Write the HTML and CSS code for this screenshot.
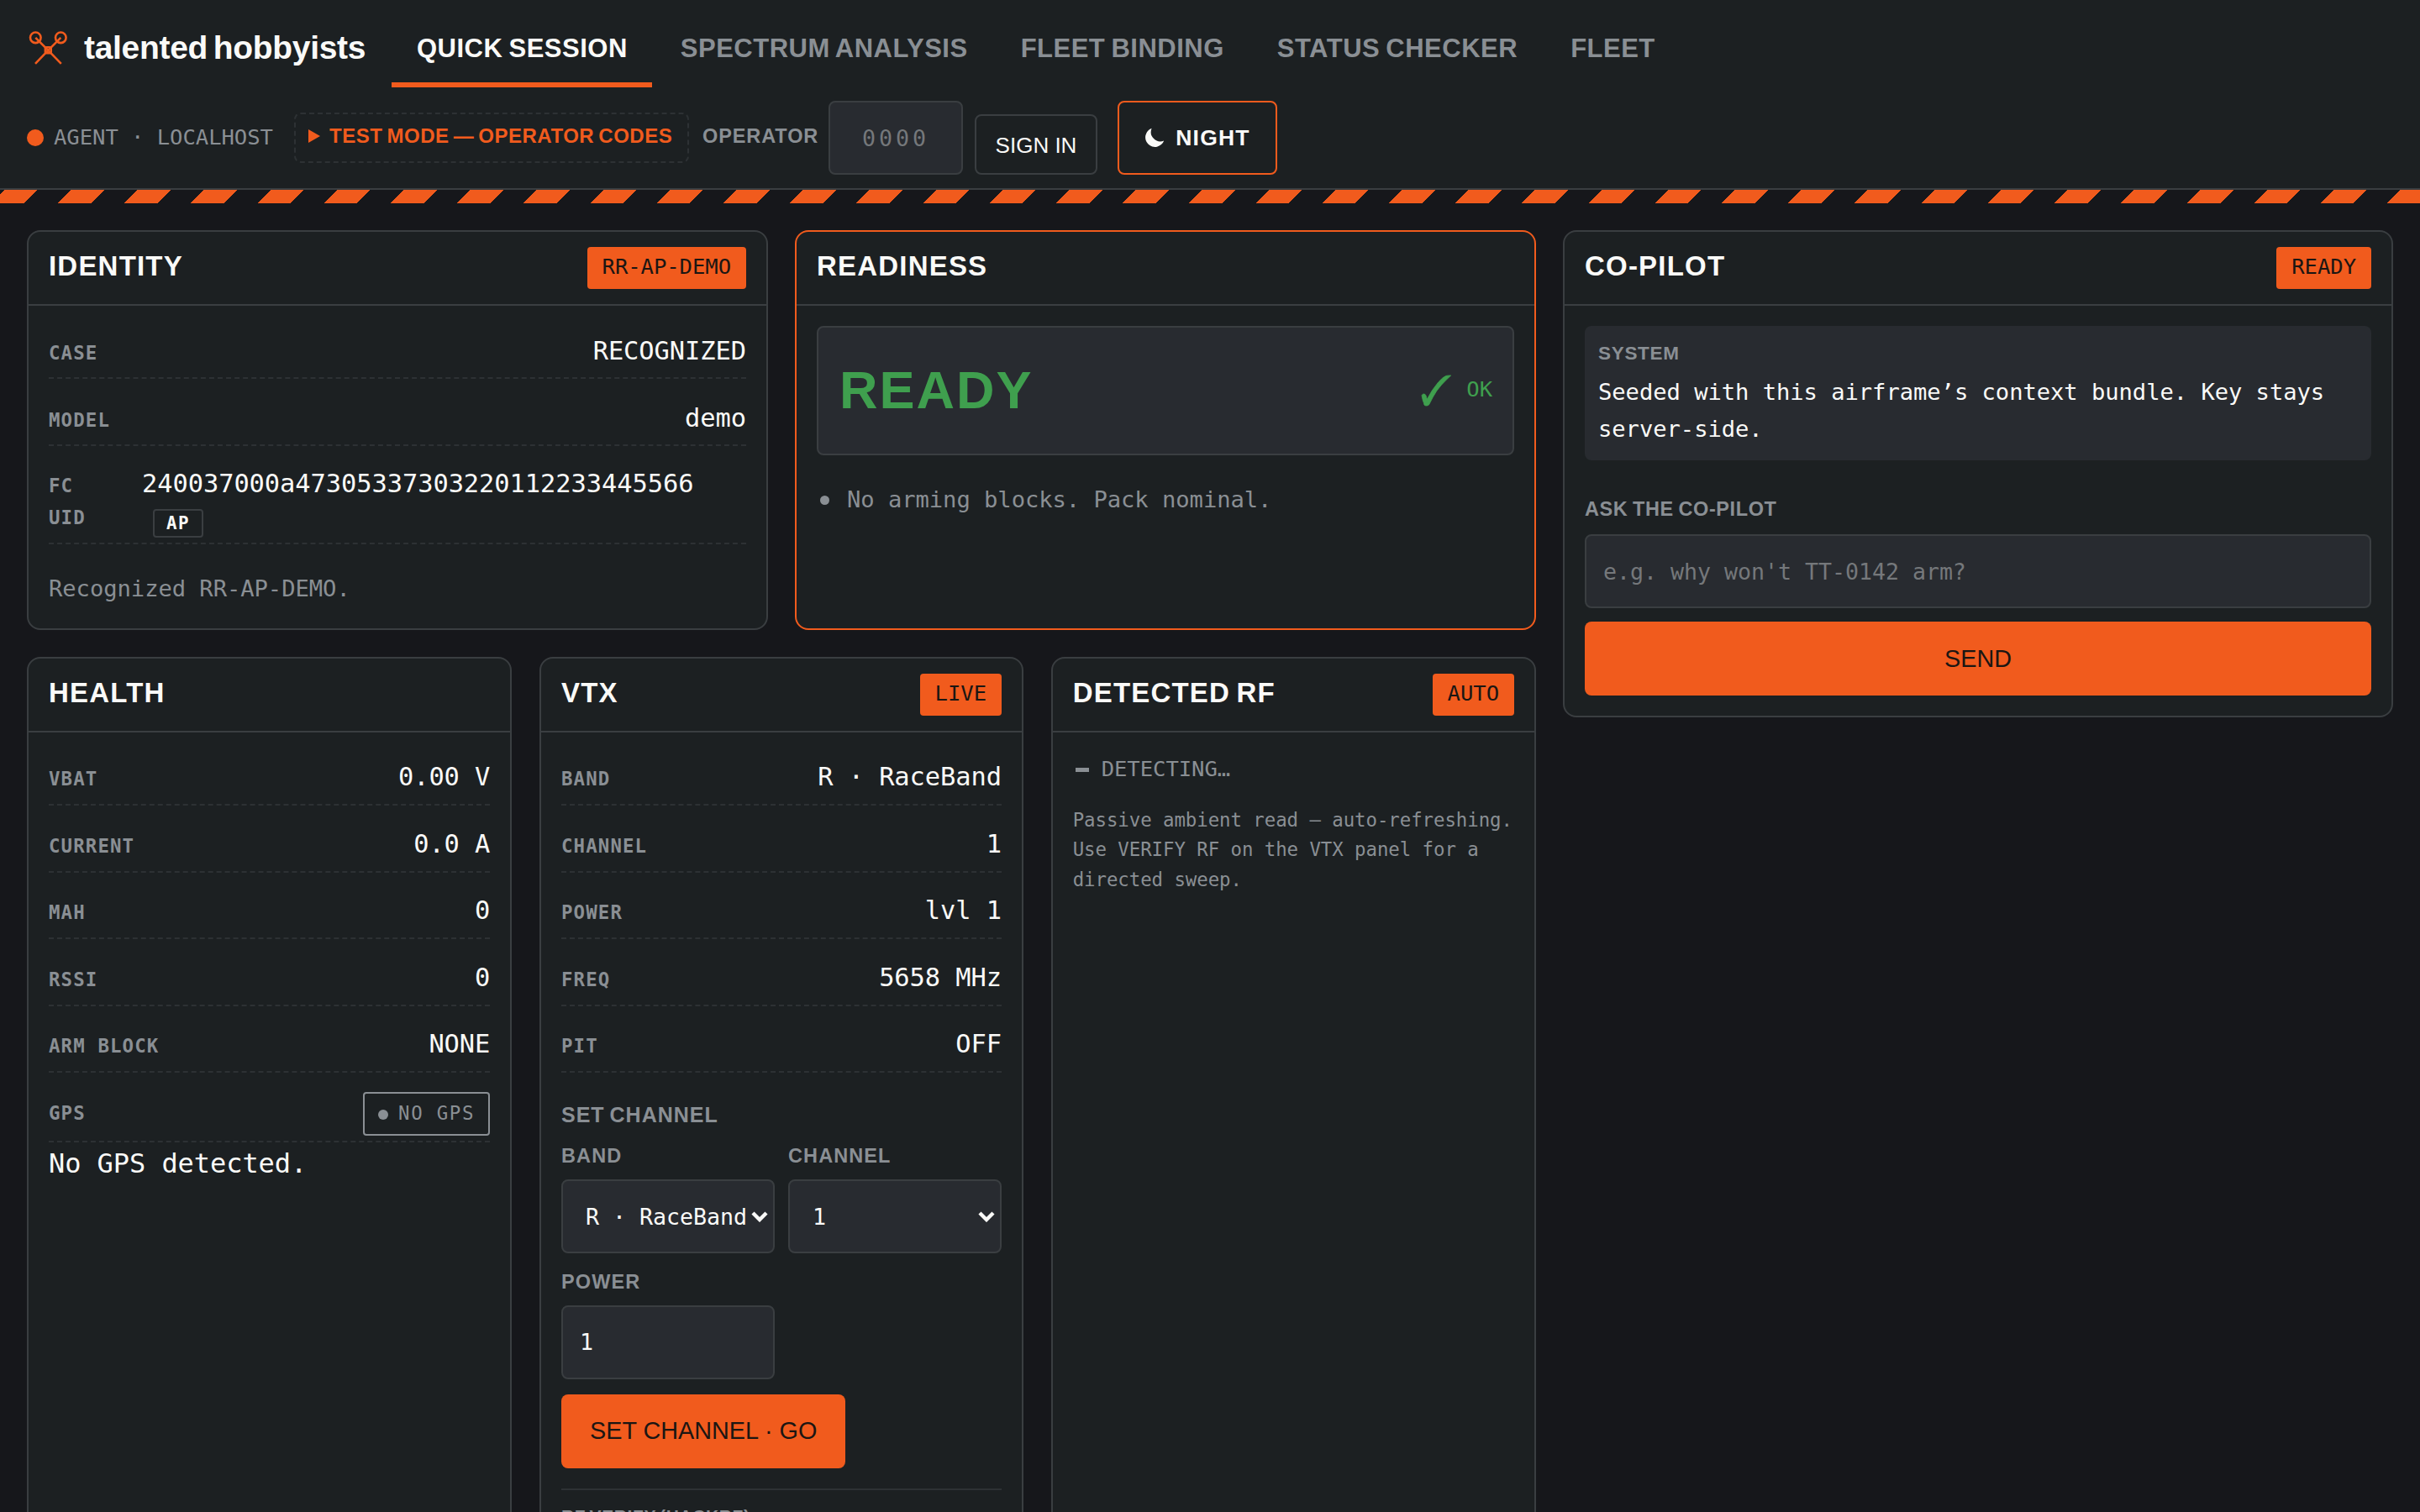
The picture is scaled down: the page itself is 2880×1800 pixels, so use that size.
FILE: index.html
```html
<!DOCTYPE html>
<html lang="en">

<head>
  <meta charset="UTF-8" />
  <meta name="viewport" content="width=device-width, initial-scale=1.0" />
  <title>talented hobbyists</title>
  <link rel="stylesheet" href="styles.css">
</head>

<body>
  <header class="topbar">
    <div class="topbar-row">
      <a class="brand">
        <svg class="brand-mark" viewBox="0 0 48 48" fill="none" stroke="currentColor" stroke-width="2.6">
          <circle cx="10.3" cy="11.8" r="6.3" />
          <circle cx="40.3" cy="11.8" r="6.3" />
          <path d="M10.3 11.8 L25.3 26.8 L40.3 11.8 M25.3 26.8 L10 42.8 M25.3 26.8 L40.8 42.8" />
          <rect x="21.8" y="23.3" width="7" height="7" rx="1.5" stroke-width="2.4" />
        </svg>
        <span>talented hobbyists</span>
      </a>
      <nav class="tabs">
        <a class="tab active">QUICK SESSION</a>
        <a class="tab">SPECTRUM ANALYSIS</a>
        <a class="tab">FLEET BINDING</a>
        <a class="tab">STATUS CHECKER</a>
        <a class="tab">FLEET</a>
      </nav>
    </div>
    <div class="topbar-row session">
      <div class="agent"><i class="dot"></i><span>AGENT · LOCALHOST</span></div>
      <div class="test-mode"><i class="caret"></i>TEST MODE — OPERATOR CODES</div>
      <label class="op-label" for="op">OPERATOR</label>
      <input class="field op-code" id="op" placeholder="0000" />
      <button class="btn-ghost">SIGN IN</button>
      <button class="btn-theme">
        <svg class="moon" viewBox="0 0 24 24" fill="currentColor">
          <path d="M8.6 0.8 A11.4 11.4 0 1 0 23.2 15.4 A11.2 11.2 0 0 1 8.6 0.8 Z" />
        </svg>
        NIGHT
      </button>
    </div>
  </header>
  <div class="hazard"></div>

  <main class="layout">
    <div class="panels">
      <section class="panel wide">
        <div class="panel-head">
          <h2>IDENTITY</h2><span class="badge">RR-AP-DEMO</span>
        </div>
        <div class="panel-body">
          <div class="row"><span class="key">CASE</span><span class="val">RECOGNIZED</span></div>
          <div class="row"><span class="key">MODEL</span><span class="val">demo</span></div>
          <div class="row row-uid">
            <span class="key">FC UID</span>
            <span class="val">240037000a47305337303220112233445566 <span class="chip">AP</span></span>
          </div>
          <p class="note">Recognized RR-AP-DEMO.</p>
        </div>
      </section>

      <section class="panel wide hot">
        <div class="panel-head">
          <h2>READINESS</h2>
        </div>
        <div class="panel-body">
          <div class="verdict">
            <strong>READY</strong>
            <span class="verdict-state">
              <svg class="check" viewBox="0 0 40 40" fill="currentColor" stroke="currentColor" stroke-width="0.8">
                <path d="M3 25.7 Q4 23.8 5.5 24 Q7.4 24.2 8 26 L9.3 30.3 Q15 19 22.7 10 Q28 4 31.7 2.5 Q34 1.8 37.7 2 L32.7 6.7 Q26.5 12.6 21 20 Q16 27.6 11.7 36.7 Q10 38.2 8.3 38 Q6.4 38 6 37 Q5.4 34 4.3 31.7 Z" />
              </svg>
              <span>OK</span>
            </span>
          </div>
          <ul class="blocks">
            <li>No arming blocks. Pack nominal.</li>
          </ul>
        </div>
      </section>

      <section class="panel">
        <div class="panel-head">
          <h2>HEALTH</h2>
        </div>
        <div class="panel-body">
          <div class="row"><span class="key">VBAT</span><span class="val">0.00 V</span></div>
          <div class="row"><span class="key">CURRENT</span><span class="val">0.0 A</span></div>
          <div class="row"><span class="key">MAH</span><span class="val">0</span></div>
          <div class="row"><span class="key">RSSI</span><span class="val">0</span></div>
          <div class="row"><span class="key">ARM BLOCK</span><span class="val">NONE</span></div>
          <div class="row row-gps"><span class="key">GPS</span><span class="gps"><i></i>NO GPS</span></div>
          <p class="gps-text">No GPS detected.</p>
        </div>
      </section>

      <section class="panel vtx">
        <div class="panel-head">
          <h2>VTX</h2><span class="badge">LIVE</span>
        </div>
        <div class="panel-body">
          <div class="row"><span class="key">BAND</span><span class="val">R · RaceBand</span></div>
          <div class="row"><span class="key">CHANNEL</span><span class="val">1</span></div>
          <div class="row"><span class="key">POWER</span><span class="val">lvl 1</span></div>
          <div class="row"><span class="key">FREQ</span><span class="val">5658 MHz</span></div>
          <div class="row"><span class="key">PIT</span><span class="val">OFF</span></div>
          <h3>SET CHANNEL</h3>
          <div class="form-grid">
            <div class="form-item">
              <label>BAND</label>
              <div class="select">
                <select class="field">
                  <option>R · RaceBand</option>
                </select>
                <svg class="chev" viewBox="0 0 20 14" fill="none" stroke="currentColor" stroke-width="4.4">
                  <path d="M2 3 L10 11 L18 3" />
                </svg>
              </div>
            </div>
            <div class="form-item">
              <label>CHANNEL</label>
              <div class="select">
                <select class="field">
                  <option>1</option>
                </select>
                <svg class="chev" viewBox="0 0 20 14" fill="none" stroke="currentColor" stroke-width="4.4">
                  <path d="M2 3 L10 11 L18 3" />
                </svg>
              </div>
            </div>
            <div class="form-item">
              <label>POWER</label>
              <input class="field" value="1" />
            </div>
          </div>
          <button class="btn-primary">SET CHANNEL · GO</button>
          <div class="verify">
            <h4>RF VERIFY (HACKRF)</h4>
          </div>
        </div>
      </section>

      <section class="panel">
        <div class="panel-head">
          <h2>DETECTED RF</h2><span class="badge">AUTO</span>
        </div>
        <div class="panel-body">
          <div class="detecting"><i></i>DETECTING…</div>
          <p class="hint">Passive ambient read — auto-refreshing. Use VERIFY RF on the VTX panel for a directed sweep.</p>
        </div>
      </section>
    </div>

    <aside class="panel copilot">
      <div class="panel-head">
        <h2>CO-PILOT</h2><span class="badge">READY</span>
      </div>
      <div class="panel-body">
        <div class="message">
          <b>SYSTEM</b>
          <p>Seeded with this airframe’s context bundle. Key stays server-side.</p>
        </div>
        <label class="ask-label" for="ask">ASK THE CO-PILOT</label>
        <input class="field" id="ask" placeholder="e.g. why won't TT-0142 arm?" />
        <button class="btn-primary send">SEND</button>
      </div>
    </aside>
  </main>
</body>

</html>
```
FILE: styles.css
```css
:root {
  --bg: #16171b;
  --panel: #1c2022;
  --raised: #282b30;
  --line: #3a3e41;
  --dash: #2d3134;
  --text: #fafaf8;
  --muted: #8a8f94;
  --orange: #f15b1d;
  --green: #3f9f4e;
  --sans: "Liberation Sans", Arial, sans-serif;
  --mono: "DejaVu Sans Mono", monospace;
}

* {
  box-sizing: border-box;
}

body {
  margin: 0;
  height: 1800px;
  overflow: hidden;
  background: var(--bg);
  color: var(--text);
  font-family: var(--mono);
  font-size: 32px;
  letter-spacing: -0.002em;
}

h2,
h3,
h4,
p,
ul {
  margin: 0;
  padding: 0;
}

/* header */
.topbar {
  height: 226px;
  background: var(--panel);
  border-bottom: 2px solid var(--line);
}

.topbar-row {
  display: flex;
  align-items: center;
  height: 104px;
  padding-left: 32px;
}

.brand {
  display: flex;
  align-items: center;
  width: 434px;
  padding-top: 9px;
  font: bold 39px/46px var(--sans);
  letter-spacing: -0.3px;
  word-spacing: -4px;
}

.brand-mark {
  width: 48px;
  height: 48px;
  margin-right: 20px;
  color: var(--orange);
}

.tabs {
  display: flex;
  gap: 4px;
}

.tab {
  height: 104px;
  padding: 0 29px 0 30px;
  border-bottom: 6px solid transparent;
  font: bold 31px/116px var(--sans);
  letter-spacing: 0.5px;
  word-spacing: -2px;
  color: var(--muted);
}

.tab.active {
  color: var(--text);
  border-color: var(--orange);
}

.session {
  height: 120px;
}

.agent {
  display: flex;
  align-items: center;
  width: 318px;
  font-size: 25.6px;
  line-height: 30px;
  color: var(--muted);
}

.agent span {
  padding-bottom: 2px;
}

.agent .dot {
  width: 20px;
  height: 20px;
  margin-right: 12px;
  border-radius: 50%;
  background: var(--orange);
}

.test-mode {
  display: flex;
  align-items: center;
  width: 470px;
  height: 60px;
  padding: 0 0 4px 15px;
  border: 2px dashed var(--dash);
  border-radius: 8px;
  font: bold 24px/30px var(--sans);
  letter-spacing: 0.5px;
  word-spacing: -2px;
  color: var(--orange);
}

.caret {
  margin-right: 11px;
  border-left: 14px solid var(--orange);
  border-top: 8px solid transparent;
  border-bottom: 8px solid transparent;
}

.op-label {
  width: 150px;
  margin-left: 16px;
  padding-bottom: 4px;
  font: bold 23.5px/30px var(--sans);
  letter-spacing: 0.9px;
  color: var(--muted);
}

.field {
  width: 100%;
  height: 88px;
  padding: 0 20px;
  border: 2px solid var(--line);
  border-radius: 8px;
  background: var(--raised);
  color: var(--text);
  font: 26.67px var(--mono);
  letter-spacing: -0.002em;
  appearance: none;
}

.field::placeholder {
  color: #75787b;
}

.op-code {
  width: 160px;
  text-align: center;
  letter-spacing: 4px;
}

.btn-ghost {
  width: 146px;
  height: 72px;
  margin: 16px 0 0 14px;
  padding: 3px 0 0;
  border: 2px solid var(--line);
  border-radius: 8px;
  background: none;
  color: var(--text);
  font: 26px var(--sans);
}

.btn-theme {
  display: flex;
  align-items: center;
  justify-content: center;
  width: 190px;
  height: 88px;
  margin-left: 24px;
  padding: 0;
  border: 2px solid var(--orange);
  border-radius: 8px;
  background: none;
  color: var(--text);
  font: bold 26.5px var(--sans);
  letter-spacing: 1.2px;
}

.moon {
  width: 24px;
  height: 24px;
  margin-right: 13px;
}

.hazard {
  height: 16px;
  background: repeating-linear-gradient(-45deg, var(--orange) 0 28px, var(--bg) 28px 56px);
}

/* layout */
.layout {
  display: grid;
  grid-template-columns: 1796px 988px;
  gap: 32px;
  align-items: start;
  height: 1558px;
  padding: 32px 32px 0;
  overflow: hidden;
}

.panels {
  display: grid;
  grid-template-columns: repeat(6, 1fr);
  grid-template-rows: 476px 1200px;
  gap: 32px;
}

.panel {
  grid-column: span 2;
  min-width: 0;
  border: 2px solid var(--line);
  border-radius: 16px;
  background: var(--panel);
}

.panel.wide {
  grid-column: span 3;
}

.panel.vtx {
  margin: 0 0.67px;
}

.panel.hot {
  border-color: var(--orange);
}

.panel.copilot {
  grid-column: auto;
  height: 580px;
}

.panel-head {
  display: flex;
  justify-content: space-between;
  height: 88px;
  padding: 18px 24px;
  border-bottom: 2px solid var(--line);
}

.panel-head h2 {
  font: bold 33px/45px var(--sans);
  letter-spacing: 1.2px;
  word-spacing: -3px;
}

.badge {
  height: 50px;
  padding: 0 18px;
  border-radius: 4px;
  background: var(--orange);
  color: #1b1613;
  font-size: 25.6px;
  line-height: 46px;
}

.panel-body {
  padding: 24px;
}

/* key / value rows */
.row {
  display: flex;
  justify-content: space-between;
  align-items: baseline;
  height: 63px;
  margin-bottom: 16.5px;
  padding-top: 6px;
  border-bottom: 2px dashed var(--dash);
}

.wide .row:not(.row-uid) {
  padding-top: 7px;
}

.key {
  font-size: 22.4px;
  font-weight: bold;
  line-height: 38px;
  letter-spacing: 1.12px;
  color: var(--muted);
}

.val {
  font-size: 30.4px;
  line-height: 46px;
}

.row-uid {
  height: 101px;
}

.row-uid .key {
  width: 60px;
}

.row-uid .val {
  width: 719px;
  line-height: 42px;
  padding-top: 2px;
}

.chip {
  display: inline-block;
  height: 34px;
  margin-left: 13px;
  padding: 0 14px;
  border: 2px solid var(--line);
  border-radius: 4px;
  font-size: 20.8px;
  font-weight: bold;
  line-height: 31px;
  letter-spacing: 1.5px;
  vertical-align: -2px;
}

.note {
  font-size: 27.2px;
  line-height: 44px;
  color: var(--muted);
  padding-top: 14px;
}

/* readiness */
.verdict {
  display: flex;
  align-items: center;
  justify-content: space-between;
  height: 154px;
  padding: 0 24px 0 25px;
  border: 2px solid var(--line);
  border-radius: 8px;
  background: var(--raised);
  color: var(--green);
}

.verdict strong {
  padding-bottom: 2px;
  font: bold 63px/70px var(--sans);
  letter-spacing: 2px;
}

.verdict-state {
  display: flex;
  align-items: center;
  font-size: 25.6px;
}

.verdict-state span {
  padding-bottom: 4px;
}

.check {
  width: 40px;
  height: 40px;
  margin-right: 16px;
}

.blocks {
  padding-top: 31px;
  font-size: 27.2px;
  line-height: 44px;
  list-style: none;
  color: var(--muted);
}

.blocks li {
  display: flex;
  align-items: center;
}

.blocks li::before {
  content: "";
  width: 11px;
  height: 11px;
  margin: 0 21px 0 4px;
  border-radius: 50%;
  background: var(--muted);
}

/* health */
.row-gps {
  height: 68px;
  margin: -2px 0 0;
}

.gps {
  display: flex;
  align-items: center;
  height: 52px;
  margin-top: 2px;
  padding: 0 16px 2px;
  border: 2px solid var(--muted);
  border-radius: 4px;
  font-size: 22.4px;
  letter-spacing: 1.75px;
  color: var(--muted);
}

.gps i {
  width: 12px;
  height: 12px;
  margin: 4px 12px 0 0;
  border-radius: 50%;
  background: var(--muted);
}

.gps-text {
  line-height: 50px;
}

/* vtx form */
h3 {
  padding-top: 17px;
  font: bold 25px/32px var(--sans);
  letter-spacing: 1px;
  word-spacing: -2px;
  color: var(--muted);
}

.form-grid {
  display: grid;
  grid-template-columns: 1fr 1fr;
  gap: 18px 16px;
  margin-top: 17px;
}

.form-item label {
  display: block;
  height: 44px;
  font: bold 23.5px/32px var(--sans);
  letter-spacing: 1.1px;
  color: var(--muted);
}

.select {
  position: relative;
}

.select .field {
  padding: 1px 0 0 27px;
}

.chev {
  position: absolute;
  right: 8px;
  top: 37px;
  width: 20px;
  height: 14px;
}

.btn-primary {
  height: 88px;
  margin-top: 18px;
  padding: 0 34px;
  border: 0;
  border-radius: 8px;
  background: var(--orange);
  color: #1b1613;
  font: 28.8px var(--sans);
}

.verify {
  margin-top: 24px;
  padding-top: 15px;
  border-top: 2px solid var(--dash);
}

.verify h4 {
  font: bold 21px/32px var(--sans);
  letter-spacing: 0.6px;
  word-spacing: -2px;
  color: var(--muted);
}

/* detected rf */
.detecting {
  display: flex;
  align-items: center;
  height: 38px;
  font-size: 25.6px;
  color: var(--muted);
}

.detecting i {
  width: 16px;
  height: 5px;
  margin: 2px 15px 0 3px;
  background: var(--muted);
}

.hint {
  margin-top: 25px;
  font-size: 22.4px;
  line-height: 35.4px;
  color: var(--muted);
}

/* co-pilot */
.message {
  height: 160px;
  padding: 16px;
  border-radius: 8px;
  background: var(--raised);
  font-size: 27.2px;
  line-height: 44px;
}

.message b {
  display: block;
  font: bold 22.5px/34px var(--sans);
  letter-spacing: 0.7px;
  color: var(--muted);
}

.message p {
  padding-top: 7px;
}

.ask-label {
  display: block;
  margin: 42px 0 14px;
  font: bold 23.5px/32px var(--sans);
  letter-spacing: 0.6px;
  word-spacing: -1.5px;
  color: var(--muted);
}

.send {
  width: 100%;
  margin-top: 16px;
}
```
